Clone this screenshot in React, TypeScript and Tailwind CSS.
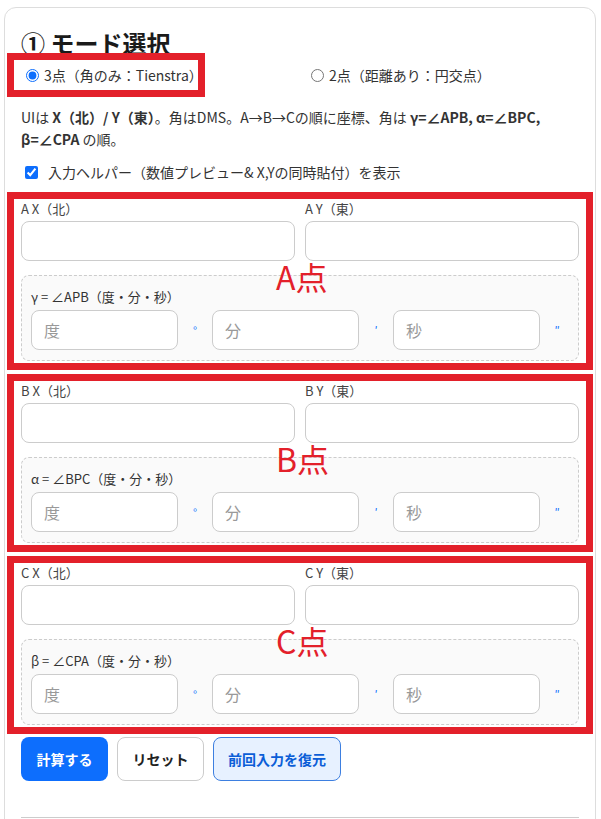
import React from 'react';

const FONT = { fontFamily: '"Noto Sans CJK JP", "Noto Sans", sans-serif' };

type Sec = { p: string; angle: string; tag: string };

const SECTIONS: Sec[] = [
  { p: 'A', angle: 'γ = ∠APB（度・分・秒）', tag: 'A点' },
  { p: 'B', angle: 'α = ∠BPC（度・分・秒）', tag: 'B点' },
  { p: 'C', angle: 'β = ∠CPA（度・分・秒）', tag: 'C点' },
];

const UNITS = [
  { ph: '度', u: '°' },
  { ph: '分', u: '′' },
  { ph: '秒', u: '″' },
];

const PointSection: React.FC<{ s: Sec }> = ({ s }) => (
  <div className="relative">
    <div className="grid grid-cols-2 gap-[10px]">
      <div>
        <label className="block text-[13px] leading-[15px] text-[#444] mb-[5px]">{s.p} X（北）</label>
        <input type="text" className="block w-full h-[40px] rounded-lg border border-[#ccc] bg-white outline-none" />
      </div>
      <div>
        <label className="block text-[13px] leading-[15px] text-[#444] mb-[5px]">{s.p} Y（東）</label>
        <input type="text" className="block w-full h-[40px] rounded-lg border border-[#ccc] bg-white outline-none" />
      </div>
    </div>

    <div className="mt-[14px] rounded-lg border border-dashed border-[#ccc] bg-[#fafafa] pt-[13px] pb-[10px] pl-[9px] pr-[4px]">
      <div className="text-[13px] leading-[15px] text-[#333] mb-[6px]">{s.angle}</div>
      <div className="flex">
        {UNITS.map(u => (
          <div key={u.ph} className="flex-1 flex items-center">
            <input
              type="text"
              placeholder={u.ph}
              className="block w-full min-w-0 h-[40px] rounded-lg border border-[#ccc] bg-white pl-[12px] text-[16px] placeholder:text-[#999] outline-none"
            />
            <span className="w-[34px] shrink-0 text-center text-[11px] text-[#0d6efd]">{u.u}</span>
          </div>
        ))}
      </div>
    </div>

    {/* annotation overlay */}
    <div className="pointer-events-none absolute left-[-14px] right-[-14px] top-[-9px] bottom-[-9px] border-[7px] border-[#e3202a]"></div>
    <div className="pointer-events-none absolute left-[255px] top-[59px] text-[32px] leading-[32px] text-[#e3202a]">{s.tag}</div>
  </div>
);

const App: React.FC = () => {
  return (
    <div className="min-h-screen bg-white pl-[4px] pr-[5px] pt-[7px]" style={FONT}>
      <div className="rounded-xl border border-[#ddd] px-4 pt-[20px] pb-6">
        <h2 className="text-[24px] leading-[29px] font-bold text-[#1a1a1a] mb-[8px]">① モード選択</h2>

        {/* mode radios */}
        <div className="relative grid grid-cols-2 gap-[10px] h-[20px] text-[14px] text-[#333]">
          <label className="flex items-center gap-[5px]">
            <input type="radio" name="mode" defaultChecked className="ml-[5px] w-[13px] h-[13px] accent-[#0d6efd]" />
            3点（角のみ：Tienstra）
          </label>
          <label className="flex items-center gap-[5px]">
            <input type="radio" name="mode" className="ml-[6px] w-[13px] h-[13px]" />
            2点（距離あり：円交点）
          </label>
          <div className="pointer-events-none absolute left-[-14px] top-[-12px] w-[198px] h-[44px] border-[7px] border-[#e3202a]"></div>
        </div>

        <p className="mt-[21px] text-[14px] leading-[22px] text-[#333]">
          UIは <b>X（北）/ Y（東）</b>。角はDMS。A→B→Cの順に座標、角は <b>γ=∠APB, α=∠BPC,</b>
          <br />
          <b>β=∠CPA</b> の順。
        </p>

        <label className="mt-[12px] flex items-center h-[20px] gap-[10px] text-[14px] text-[#333]">
          <input type="checkbox" defaultChecked className="ml-[4px] w-[13px] h-[13px] accent-[#0d6efd]" />
          入力ヘルパー（数値プレビュー& X,Yの同時貼付）を表示
        </label>

        <div className="mt-[19px] flex flex-col gap-[22px]">
          {SECTIONS.map(s => (
            <PointSection key={s.p} s={s} />
          ))}
        </div>

        <div className="mt-[12px] flex gap-[9px]">
          <button className="h-[44px] w-[87px] rounded-lg bg-[#0d6efd] text-[14px] font-bold text-white">計算する</button>
          <button className="h-[44px] w-[87px] rounded-lg border border-[#ccc] bg-white text-[14px] font-bold text-[#222]">リセット</button>
          <button className="h-[44px] w-[128px] rounded-lg border border-[#3d7fe0] bg-[#e7f1ff] text-[14px] font-bold text-[#0b5ed7]">前回入力を復元</button>
        </div>

        <hr className="mt-[36px] border-0 border-t border-[#ccc]" />
        <div className="h-[40px]"></div>
      </div>
    </div>
  );
};

export default App;
